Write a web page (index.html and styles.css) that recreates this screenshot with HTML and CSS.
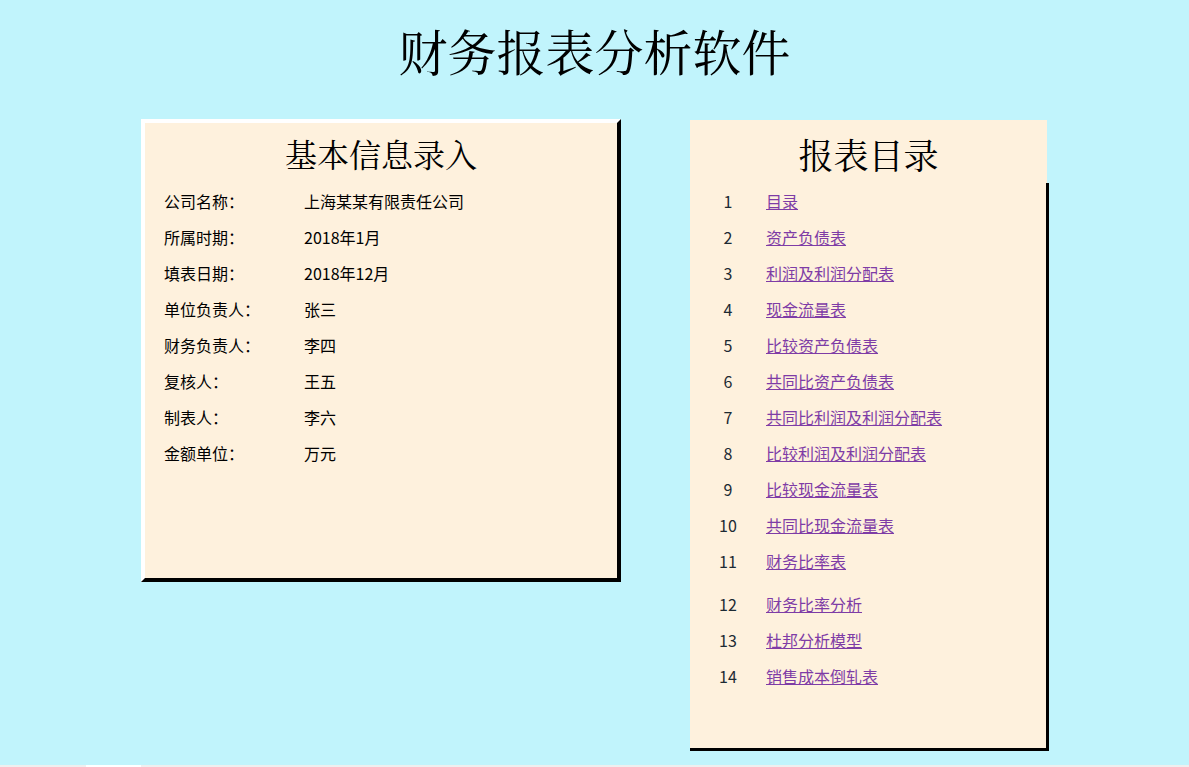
FILE: index.html
```html
<!DOCTYPE html>
<html lang="zh-CN">
<head>
<meta charset="utf-8">
<title>财务报表分析软件</title>
<link rel="stylesheet" href="styles.css">
</head>
<body>
<h1 class="main-title">财务报表分析软件</h1>
<div class="panels">
  <section class="info-panel">
    <h2 class="panel-title">基本信息录入</h2>
    <div class="info-rows">
      <div class="info-row"><span class="info-label">公司名称：</span><span class="info-value">上海某某有限责任公司</span></div>
      <div class="info-row"><span class="info-label">所属时期：</span><span class="info-value">2018年1月</span></div>
      <div class="info-row"><span class="info-label">填表日期：</span><span class="info-value">2018年12月</span></div>
      <div class="info-row"><span class="info-label">单位负责人：</span><span class="info-value">张三</span></div>
      <div class="info-row"><span class="info-label">财务负责人：</span><span class="info-value">李四</span></div>
      <div class="info-row"><span class="info-label">复核人：</span><span class="info-value">王五</span></div>
      <div class="info-row"><span class="info-label">制表人：</span><span class="info-value">李六</span></div>
      <div class="info-row"><span class="info-label">金额单位：</span><span class="info-value">万元</span></div>
    </div>
  </section>
  <section class="toc-panel">
    <div class="toc-head"><h2 class="panel-title toc-title">报表目录</h2></div>
    <div class="toc-list">
      <div class="toc-group">
        <div class="toc-row"><span class="toc-num">1</span><a class="toc-link" href="#">目录</a></div>
        <div class="toc-row"><span class="toc-num">2</span><a class="toc-link" href="#">资产负债表</a></div>
        <div class="toc-row"><span class="toc-num">3</span><a class="toc-link" href="#">利润及利润分配表</a></div>
        <div class="toc-row"><span class="toc-num">4</span><a class="toc-link" href="#">现金流量表</a></div>
        <div class="toc-row"><span class="toc-num">5</span><a class="toc-link" href="#">比较资产负债表</a></div>
        <div class="toc-row"><span class="toc-num">6</span><a class="toc-link" href="#">共同比资产负债表</a></div>
        <div class="toc-row"><span class="toc-num">7</span><a class="toc-link" href="#">共同比利润及利润分配表</a></div>
        <div class="toc-row"><span class="toc-num">8</span><a class="toc-link" href="#">比较利润及利润分配表</a></div>
        <div class="toc-row"><span class="toc-num">9</span><a class="toc-link" href="#">比较现金流量表</a></div>
        <div class="toc-row"><span class="toc-num">10</span><a class="toc-link" href="#">共同比现金流量表</a></div>
        <div class="toc-row"><span class="toc-num">11</span><a class="toc-link" href="#">财务比率表</a></div>
      </div>
      <div class="toc-group toc-group-second">
        <div class="toc-row"><span class="toc-num">12</span><a class="toc-link" href="#">财务比率分析</a></div>
        <div class="toc-row"><span class="toc-num">13</span><a class="toc-link" href="#">杜邦分析模型</a></div>
        <div class="toc-row"><span class="toc-num">14</span><a class="toc-link" href="#">销售成本倒轧表</a></div>
      </div>
    </div>
  </section>
</div>
<div class="bottom-strip"><div class="bottom-piece"></div></div>
</body>
</html>
```

FILE: styles.css
```css
html, body {
  margin: 0;
  padding: 0;
}
body {
  background: #c1f4fc;
  font-family: "Noto Sans CJK SC", "Noto Sans", sans-serif;
  font-size: 16px;
  color: #000;
  width: 1189px;
  min-height: 767px;
  overflow: hidden;
}
.main-title {
  margin: 0;
  padding-top: 20px;
  padding-bottom: 2px;
  font-family: "Noto Serif CJK SC", "Noto Sans CJK SC", serif;
  font-weight: normal;
  font-size: 49px;
  line-height: 60px;
  text-align: center;
}
.panels {
  display: flex;
  align-items: flex-start;
  padding-left: 141px;
  margin-top: 37px;
  gap: 69px;
}
.panel-title {
  margin: 0;
  font-family: "Noto Serif CJK SC", "Noto Sans CJK SC", serif;
  font-weight: normal;
  font-size: 32px;
  line-height: 40px;
  text-align: center;
}
.toc-title {
  font-size: 35px;
}
.info-panel {
  box-sizing: border-box;
  width: 480px;
  height: 463px;
  background: #fef1dd;
  border: 4px solid;
  border-color: #ffffff #000000 #000000 #ffffff;
  padding-top: 10px;
}
.info-rows {
  margin-top: 10px;
  padding-left: 19px;
}
.info-row {
  display: flex;
  height: 36px;
  line-height: 36px;
}
.info-label {
  width: 140px;
}
.toc-panel {
  margin-top: 1px;
  width: 359px;
}
.toc-head {
  box-sizing: border-box;
  width: 357px;
  height: 63px;
  padding-top: 14px;
  background: #fef1dd;
}
.toc-list {
  box-sizing: border-box;
  width: 359px;
  height: 568px;
  background: #fef1dd;
  border-right: 3px solid #000;
  border-bottom: 3px solid #000;
}
.toc-group-second {
  margin-top: 7px;
}
.toc-row {
  display: flex;
  height: 36px;
  line-height: 36px;
}
.toc-num {
  width: 36px;
  margin-left: 20px;
  margin-right: 20px;
  text-align: center;
  color: #1c2a33;
}
.toc-link {
  color: #7e3ca6;
  text-decoration: underline;
}
.bottom-strip {
  margin-top: 14px;
  height: 4px;
  background: #efefef;
}
.bottom-piece {
  margin-left: 86px;
  width: 55px;
  height: 4px;
  background: #ffffff;
}
```
